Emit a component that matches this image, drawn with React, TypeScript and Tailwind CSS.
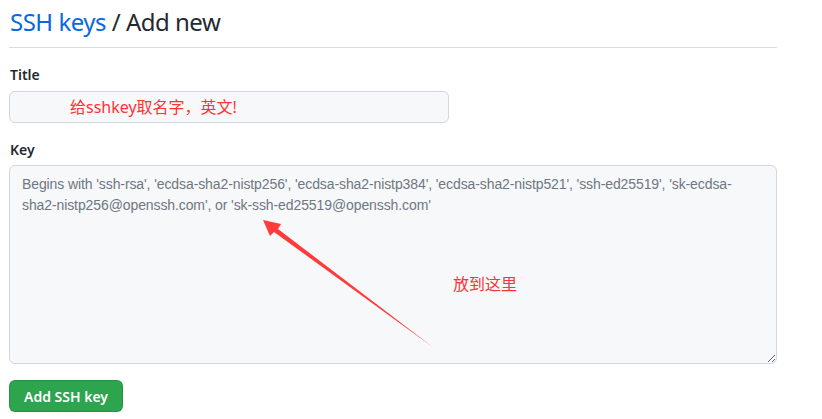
import React from 'react';

export default function App() {
  const placeholder =
    "Begins with 'ssh-rsa', 'ecdsa-sha2-nistp256', 'ecdsa-sha2-nistp384', 'ecdsa-sha2-nistp521', 'ssh-ed25519', 'sk-ecdsa-\nsha2-nistp256@openssh.com', or 'sk-ssh-ed25519@openssh.com'";

  return (
    <div
      className="relative w-[822px] h-[419px] bg-white overflow-hidden"
      style={{ fontFamily: '"Noto Sans", "Noto Sans CJK SC", sans-serif' }}
    >
      <div className="pl-[9px] w-[777px]">
        {/* header */}
        <div className="pt-[4px] pb-[7px] border-b border-[#d8dee4]">
          <h1 className="pl-px text-[24px] leading-[36px] font-normal tracking-[-0.5px] text-[#24292f]">
            <a className="text-[#0969da]">SSH keys</a> / Add new
          </h1>
        </div>

        <form className="mt-[16px]">
          <label className="block pl-px text-[14px] leading-[21px] font-semibold text-[#24292f]">Title</label>
          <input
            type="text"
            className="mt-[6px] block w-[440px] h-[32px] rounded-[6px] border border-[#d0d7de] bg-[#f6f8fa] px-3 text-[14px] outline-none"
          />

          <label className="mt-[16px] block pl-px text-[14px] leading-[21px] font-semibold text-[#24292f]">Key</label>
          <textarea
            placeholder={placeholder}
            className="mt-[5px] block w-[768px] h-[199px] rounded-[6px] border border-[#d0d7de] bg-[#f6f8fa] px-3 py-2 font-['Liberation_Sans',sans-serif] text-[14px] leading-[21px] tracking-[-0.1px] text-[#24292f] placeholder:text-[#6e7781] outline-none"
          />

          <button
            type="button"
            className="mt-[16px] w-[114px] h-[32px] rounded-[6px] border border-[#1b1f2426] bg-[#2da44e] text-white text-[14px] font-semibold"
          >
            Add SSH key
          </button>
        </form>
      </div>

      {/* red annotations */}
      <span className="absolute left-[70px] top-[96px] text-[16px] leading-[22px] text-[#ff3333]">
        给sshkey取名字，英文!
      </span>
      <span className="absolute left-[453px] top-[273px] text-[16px] leading-[22px] text-[#ff3333]">
        放到这里
      </span>
      <svg className="absolute left-0 top-0 pointer-events-none" width="822" height="419">
        <polygon
          points="263,220 281,224 278,229 434,348 274,232 270,236"
          fill="#ff3b3b"
        />
      </svg>
    </div>
  );
}
